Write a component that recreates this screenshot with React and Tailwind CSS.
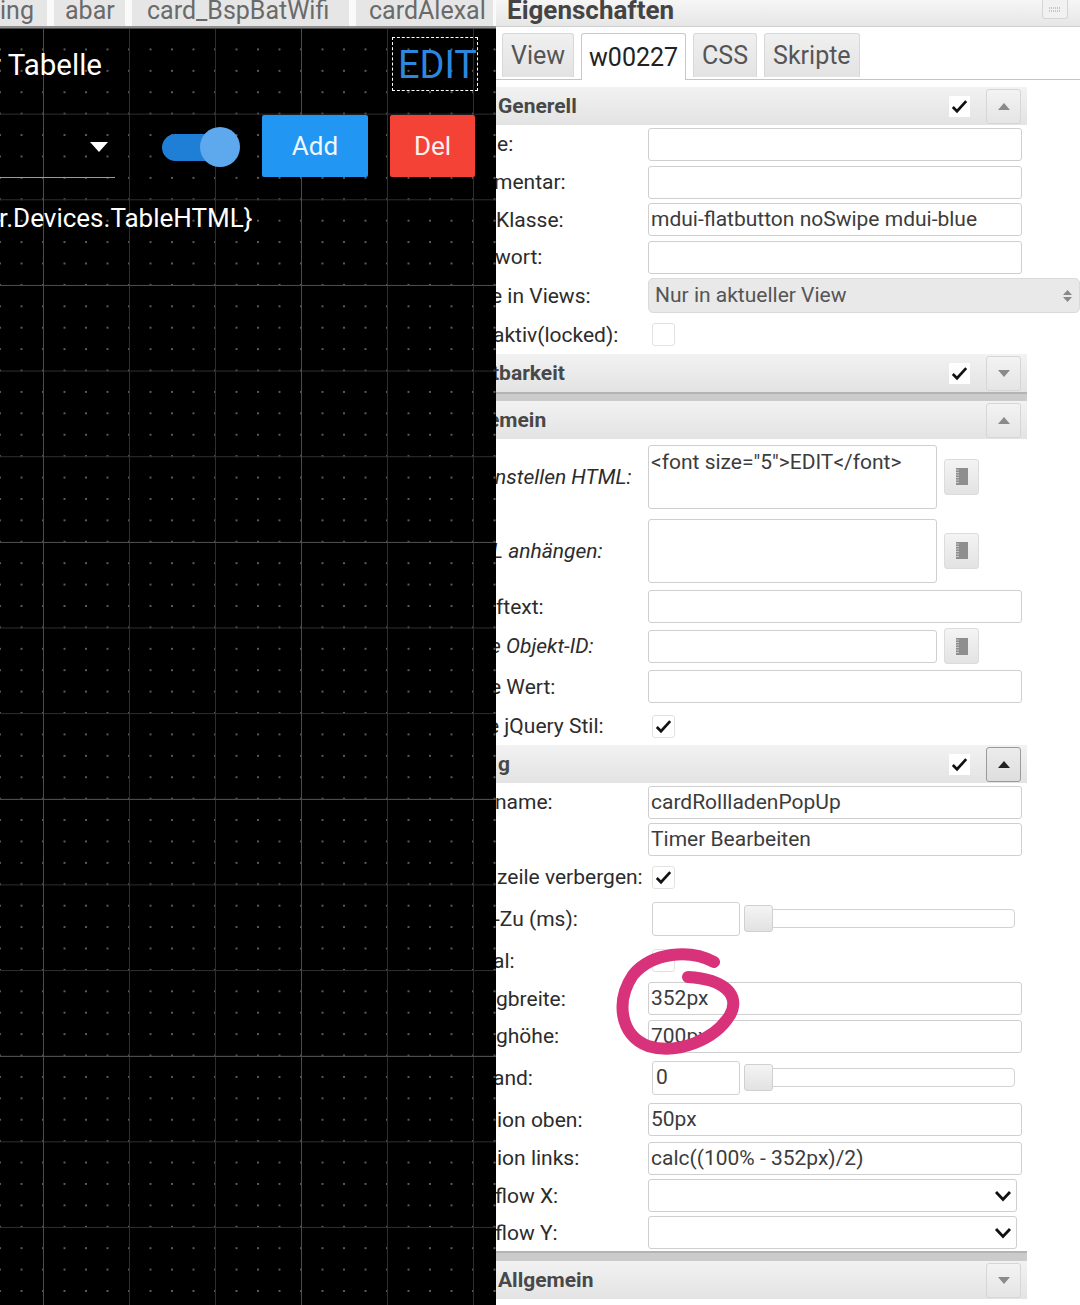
import React from "react";

const Check = () => (
  <svg width="17" height="15" viewBox="0 0 17 15">
    <path d="M1.8 8 L6 12.2 L15.2 2.2" fill="none" stroke="#111" strokeWidth="2.7" />
  </svg>
);

const TriUp = ({ color = "#7a7a7a" }) => (
  <svg width="12" height="7" viewBox="0 0 12 7">
    <polygon points="0,7 6,0 12,7" fill={color} />
  </svg>
);
const TriDown = ({ color = "#7a7a7a" }) => (
  <svg width="12" height="7" viewBox="0 0 12 7">
    <polygon points="0,0 12,0 6,7" fill={color} />
  </svg>
);

const Header = ({ title, off = "", check = false, up = true, pressed = false }) => (
  <div className="flex items-center h-[38px] w-[531px] shrink-0 bg-linear-to-b from-[#f2f2f2] to-[#e3e3e3]">
    <div className="flex-1 overflow-hidden whitespace-nowrap">
      <span className={`block pt-[2px] font-bold text-[21px] text-[#484848] pl-[2px] ${off}`}>{title}</span>
    </div>
    {check && (
      <div className="w-[21px] h-[21px] bg-white flex items-center justify-center mr-[16px]">
        <Check />
      </div>
    )}
    <div
      className={
        pressed
          ? "w-[35px] h-[35px] mr-[6px] rounded-[3px] border border-[#9a9a9a] bg-linear-to-b from-[#ececec] to-[#dedede] flex items-center justify-center"
          : "w-[35px] h-[35px] mr-[6px] rounded-[3px] border border-[#d6d6d6] bg-linear-to-b from-[#f3f3f3] to-[#e5e5e5] flex items-center justify-center"
      }
    >
      {up ? <TriUp color={pressed ? "#222" : "#8a8a8a"} /> : <TriDown color="#8a8a8a" />}
    </div>
  </div>
);

const Divider = ({ h }) => (
  <div className={`w-[531px] shrink-0 bg-[#cbcbcb] border-t-2 border-[#b4b4b4] ${h}`} />
);

const Row = ({ h, label, off = "", italic = false, children }) => (
  <div className={`flex items-center shrink-0 ${h}`}>
    <div className="w-[152px] shrink-0 overflow-hidden whitespace-nowrap">
      <span className={`block pt-[2px] pl-px text-[21px] text-[#2c2c2c] ${italic ? "italic" : ""} ${off}`}>{label}</span>
    </div>
    {children}
  </div>
);

const Input = ({ value = "", w = "w-[374px]" }) => (
  <div className={`h-[33px] ${w} shrink-0 rounded-[3px] border border-[#cfcfcf] bg-white pl-[2px] pt-px flex items-center text-[21px] text-[#3c3c3c] whitespace-nowrap overflow-hidden`}>
    {value}
  </div>
);

const Box = ({ checked = false }) => (
  <div className="ml-[4px] w-[23px] h-[23px] rounded-[3px] border border-[#e2e2e2] bg-white flex items-center justify-center">
    {checked && <Check />}
  </div>
);

const PickBtn = () => (
  <div className="ml-[7px] w-[35px] h-[36px] rounded-[3px] border border-[#dcdcdc] bg-linear-to-b from-[#f4f4f4] to-[#e3e3e3] flex items-center justify-center">
    <svg width="12" height="17" viewBox="0 0 12 17">
      <rect x="0" y="0" width="12" height="17" fill="#8e8e8e" />
      <path d="M0 2h3M0 4.5h3M0 7h3M0 9.5h3M0 12h3M0 14.5h3" stroke="#c8c8c8" strokeWidth="1" />
    </svg>
  </div>
);

const TextArea = ({ value = "", h = "h-[64px]" }) => (
  <div className={`w-[289px] ${h} shrink-0 rounded-[3px] border border-[#cfcfcf] bg-white pl-[2px] pt-[3px] text-[21px] leading-[26px] text-[#3c3c3c] whitespace-nowrap overflow-hidden`}>
    {value}
  </div>
);

const Slider = ({ value = "" }) => (
  <div className="flex items-center">
    <div className="ml-[4px] w-[88px] h-[34px] rounded-[3px] border border-[#d2d2d2] bg-white pl-[3px] pt-px flex items-center text-[21px] text-[#3c3c3c]">
      {value}
    </div>
    <div className="relative ml-[4px] w-[271px] h-[19px] rounded-[4px] border border-[#d2d2d2] bg-white">
      <div className="absolute left-[-1px] top-[-5px] w-[29px] h-[27px] rounded-[3px] border border-[#d0d0d0] bg-linear-to-b from-[#f4f4f4] to-[#e2e2e2]" />
    </div>
  </div>
);

const FlowSelect = () => (
  <div className="w-[369px] h-[33px] shrink-0 rounded-[3px] border border-[#cfcfcf] bg-white flex items-center justify-end pr-[4px]">
    <svg width="18" height="12" viewBox="0 0 18 12">
      <path d="M2 2 L9 9.5 L16 2" fill="none" stroke="#111" strokeWidth="2.8" />
    </svg>
  </div>
);

export default function App() {
  return (
    <div className="relative w-[1080px] h-[1305px] flex overflow-hidden bg-white font-['Roboto',sans-serif]">
      {/* LEFT: tabs + canvas */}
      <div className="w-[496px] shrink-0 flex flex-col bg-black">
        <div className="h-[28px] shrink-0 flex gap-[7px] bg-[#fafafa] border-b-2 border-[#8f8f8f] overflow-hidden whitespace-nowrap text-[25px] leading-[25px] text-[#6a6a6a]">
          <div className="w-[47px] shrink-0 bg-[#e6e6e6]">
            <span className="block mt-[-2px]">ing</span>
          </div>
          <div className="w-[71px] shrink-0 bg-[#e6e6e6] pl-[11px]">
            <span className="block mt-[-2px]">abar</span>
          </div>
          <div className="w-[217px] shrink-0 bg-[#e6e6e6] pl-[15px]">
            <span className="block mt-[-2px]">card_BspBatWifi</span>
          </div>
          <div className="w-[137px] shrink-0 bg-[#e6e6e6] pl-[13px] overflow-hidden">
            <span className="block mt-[-2px]">cardAlexal</span>
          </div>
        </div>
        <div className="relative flex-1 overflow-hidden [background-image:linear-gradient(to_right,#4b4b4b_1px,transparent_1px),linear-gradient(to_bottom,#4b4b4b_1px,transparent_1px),linear-gradient(to_right,#2e2e2e_1px,transparent_1px),linear-gradient(to_bottom,#2e2e2e_1px,transparent_1px),radial-gradient(circle,#5c5c5c_0.9px,transparent_1.4px)] [background-size:258px_257px,258px_257px,86px_85.65px,86px_85.65px,21.5px_21.41px] [background-position:43px_0,0_0,43px_0,0_0,32.25px_-10.7px]">
          <div className="absolute left-[-9px] top-[19px] text-[29.5px] leading-[36px] text-white whitespace-nowrap">r Tabelle</div>
          <div className="absolute left-[392px] top-[9px] w-[86px] h-[54px] border border-dashed border-white flex items-center pl-[5px] pt-[2px] text-[38px] leading-[40px] text-[#2b88de] whitespace-nowrap overflow-visible">
            EDIT
          </div>
          <div className="absolute left-0 top-[102px] w-[115px] h-[48px] border-b border-[#9a9a9a] flex items-start justify-end pt-[12px] pr-[7px]">
            <svg width="18" height="11" viewBox="0 0 18 11">
              <polygon points="0,0 18,0 9,10" fill="#fff" />
            </svg>
          </div>
          <div className="absolute left-[162px] top-[106px] w-[70px] h-[27px] rounded-full bg-[#1f7fd6]" />
          <div className="absolute left-[200px] top-[99px] w-[40px] h-[40px] rounded-full bg-[#5ea8ee]" />
          <div className="absolute left-[262px] top-[87px] w-[106px] h-[62px] rounded-[2px] bg-[#2196f3] flex items-center justify-center text-[26px] text-[#eef6ff]">
            Add
          </div>
          <div className="absolute left-[390px] top-[87px] w-[85px] h-[62px] rounded-[2px] bg-[#f44336] flex items-center justify-center text-[26px] text-[#fff0ef]">
            Del
          </div>
          <div className="absolute left-[-1px] top-[174px] text-[26px] leading-[32px] text-white whitespace-nowrap">r.Devices.TableHTML&#125;</div>
        </div>
      </div>

      {/* RIGHT: properties panel */}
      <div className="relative flex-1 flex flex-col overflow-hidden bg-white">
        <div className="h-[27px] shrink-0 bg-linear-to-b from-[#f6f6f6] to-[#e6e6e6] border-b border-[#d0d0d0] flex">
          <span className="block pl-[11px] mt-[-3px] font-bold text-[26px] leading-[26px] text-[#444]">Eigenschaften</span>
        </div>
        <div className="absolute right-[12px] top-0 w-[26px] h-[19px] rounded-b-[3px] border border-t-0 border-[#d4d4d4] bg-[#f1f1f1] flex items-center justify-center">
          <svg width="12" height="5" viewBox="0 0 12 5">
            <path d="M0 1h12M0 4h12" stroke="#9a9a9a" strokeWidth="1" strokeDasharray="1 1" />
          </svg>
        </div>

        {/* tabs */}
        <div className="h-[53px] shrink-0 flex items-end gap-[7px] pl-[6px] border-b border-[#c4c4c4] text-[25px] leading-[25px]">
          <div className="h-[44px] mb-[2px] px-[8px] flex items-center rounded-t-[3px] border border-b-0 border-[#d8d8d8] bg-linear-to-b from-[#f0f0f0] to-[#e3e3e3] text-[#555]">View</div>
          <div className="h-[47px] mb-[-1px] px-[7px] flex items-center rounded-t-[3px] border border-b-0 border-[#c8c8c8] bg-white text-[#222]">w00227</div>
          <div className="h-[44px] mb-[2px] px-[8px] flex items-center rounded-t-[3px] border border-b-0 border-[#d8d8d8] bg-linear-to-b from-[#f0f0f0] to-[#e3e3e3] text-[#555]">CSS</div>
          <div className="h-[44px] mb-[2px] px-[8px] flex items-center rounded-t-[3px] border border-b-0 border-[#d8d8d8] bg-linear-to-b from-[#f0f0f0] to-[#e3e3e3] text-[#555]">Skripte</div>
        </div>

        <div className="h-[7px] shrink-0" />

        <Header title="Generell" check />
        <Row h="h-[38px]" label="e:"><Input /></Row>
        <Row h="h-[38px]" label="mentar:" off="ml-[-3px]"><Input /></Row>
        <Row h="h-[37px]" label="Klasse:" off="ml-[-1px]"><Input value="mdui-flatbutton noSwipe mdui-blue" /></Row>
        <Row h="h-[38px]" label="wort:" off="ml-[-2px]"><Input /></Row>
        <Row h="h-[39px]" label="e in Views:" off="ml-[-6px]">
          <div className="w-[432px] h-[35px] shrink-0 rounded-[5px] border border-[#dadada] bg-[#e9e9e9] flex items-center justify-between pl-[6px] pr-[7px] pt-px text-[21px] text-[#555] whitespace-nowrap">
            <span>Nur in aktueller View</span>
            <svg width="9" height="14" viewBox="0 0 9 14">
              <polygon points="0,6 4.5,1 9,6" fill="#888" />
              <polygon points="0,8 9,8 4.5,13" fill="#888" />
            </svg>
          </div>
        </Row>
        <Row h="h-[39px]" label="aktiv(locked):" off="ml-[-4px]"><Box /></Row>
        <Header title="tbarkeit" off="ml-[-6px]" check up={false} />
        <Divider h="h-[9px]" />
        <Header title="emein" off="ml-[-10px]" />
        <Row h="h-[75px]" label="nstellen HTML:" italic off="ml-[-2px]">
          <TextArea value={'<font size="5">EDIT</font>'} />
          <PickBtn />
        </Row>
        <Row h="h-[73px]" label="L anhängen:" italic off="ml-[-5px]">
          <TextArea />
          <PickBtn />
        </Row>
        <Row h="h-[39px]" label="ftext:" off="ml-[-1px]"><Input /></Row>
        <Row h="h-[40px]" label="e Objekt-ID:" italic off="ml-[-7px]">
          <Input w="w-[289px]" />
          <PickBtn />
        </Row>
        <Row h="h-[41px]" label="e Wert:" off="ml-[-7px]"><Input /></Row>
        <Row h="h-[38px]" label="e jQuery Stil:" off="ml-[-9px]"><Box checked /></Row>
        <Header title="g" check pressed />
        <Row h="h-[38px]" label="name:" off="ml-[-2px]"><Input value="cardRollladenPopUp" /></Row>
        <Row h="h-[37px]" label=""><Input value="Timer Bearbeiten" /></Row>
        <Row h="h-[38px]" label="zeile verbergen:"><Box checked /></Row>
        <Row h="h-[45px]" label="-Zu (ms):" off="ml-[-3px]"><Slider /></Row>
        <Row h="h-[39px]" label="al:" off="ml-[-4px]"><Box /></Row>
        <Row h="h-[37px]" label="gbreite:" off="ml-[-1px]"><Input value="352px" /></Row>
        <Row h="h-[38px]" label="ghöhe:" off="ml-[-1px]"><Input value="700px" /></Row>
        <Row h="h-[45px]" label="and:" off="ml-[-4px]"><Slider value="0" /></Row>
        <Row h="h-[39px]" label="ion oben:"><Input value="50px" /></Row>
        <Row h="h-[38px]" label="ion links:"><Input value="calc((100% - 352px)/2)" /></Row>
        <Row h="h-[37px]" label="flow X:" off="ml-[-2px]"><FlowSelect /></Row>
        <Row h="h-[37px]" label="flow Y:" off="ml-[-2px]"><FlowSelect /></Row>
        <Divider h="h-[10px]" />
        <Header title="Allgemein" up={false} />
      </div>

      {/* pink hand-drawn annotation */}
      <svg className="absolute left-0 top-0 pointer-events-none" width="1080" height="1305" viewBox="0 0 1080 1305">
        <path
          d="M714 962 C 690 949, 652 952, 633 975 C 616 1000, 619 1035, 648 1046 C 677 1055, 715 1040, 730 1015 C 741 995, 724 979, 688 977"
          fill="none"
          stroke="#d8337a"
          strokeWidth="12"
          strokeLinecap="round"
          strokeLinejoin="round"
        />
      </svg>
    </div>
  );
}
